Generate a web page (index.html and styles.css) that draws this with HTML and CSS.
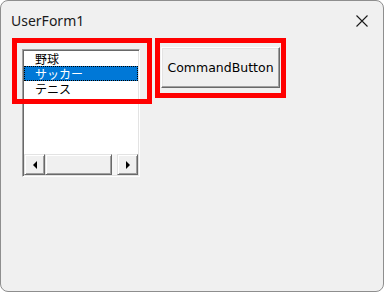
FILE: index.html
```html
<!DOCTYPE html>
<html lang="ja">
<head>
<meta charset="utf-8">
<title>UserForm1</title>
<link rel="stylesheet" href="styles.css">
</head>
<body>
<div class="window">
  <div class="titlebar">
    <span class="title">UserForm1</span>
    <svg class="close" width="12" height="12" viewBox="0 0 12 12"><path d="M0.5 0.5 L11.5 11.5 M11.5 0.5 L0.5 11.5" stroke="#1a1a1a" stroke-width="1.1" fill="none"/></svg>
  </div>
  <div class="content">
    <div class="listbox">
      <div class="items">
        <div class="item">野球</div>
        <div class="item selected">サッカー</div>
        <div class="item">テニス</div>
      </div>
      <div class="hscroll">
        <div class="sbtn"><span class="arrow-left"></span></div>
        <div class="thumb"></div>
        <div class="track"></div>
        <div class="sbtn"><span class="arrow-right"></span></div>
      </div>
    </div>
    <div class="cmd">CommandButton</div>
  </div>
  <div class="mark mark-list"></div>
  <div class="mark mark-button"></div>
</div>
</body>
</html>
```

FILE: styles.css
```css
html, body {
  margin: 0;
  padding: 0;
  background: #ffffff;
}

.window {
  position: relative;
  width: 384px;
  height: 292px;
  box-sizing: border-box;
  border: 1px solid #8e8e8e;
  border-radius: 8px;
  background: #f0f0f0;
  overflow: hidden;
}

.titlebar {
  height: 37px;
  display: flex;
  align-items: center;
  justify-content: space-between;
  padding: 0 15px 0 10px;
}

.title {
  font-family: "Noto Sans", "Open Sans", sans-serif;
  font-size: 14px;
  color: #1a1a1a;
  margin-top: 2px;
}

.close {
  display: block;
  margin-top: 2px;
}

.content {
  display: flex;
  align-items: flex-start;
  padding: 9px 0 0 21px;
}

.listbox {
  margin-top: 2px;
  width: 118px;
  height: 128px;
  box-sizing: border-box;
  border: 1px solid;
  border-color: #a0a0a0 #ffffff #ffffff #a0a0a0;
  box-shadow: inset 1px 1px #696969, inset -1px -1px #e3e3e3;
  background: #ffffff;
  padding: 1px;
  display: flex;
  flex-direction: column;
}

.items {
  flex: 1;
  font-family: "Noto Sans CJK JP", "Noto Sans", sans-serif;
  font-size: 12px;
  color: #000000;
}

.item {
  height: 15px;
  line-height: 15px;
  padding-left: 11px;
  white-space: nowrap;
}

.item.selected {
  background: #0078d7;
  color: #ffffff;
  outline: 1px dotted #000000;
  outline-offset: -1px;
}

.hscroll {
  height: 21px;
  display: flex;
}

.sbtn {
  width: 21px;
  box-sizing: border-box;
  background: #f0f0f0;
  border: 1px solid;
  border-color: #e3e3e3 #696969 #696969 #e3e3e3;
  box-shadow: inset 1px 1px #ffffff, inset -1px -1px #a0a0a0;
  display: flex;
  align-items: center;
  justify-content: center;
}

.thumb {
  width: 67px;
  box-sizing: border-box;
  background: #f0f0f0;
  border: 1px solid;
  border-color: #e3e3e3 #696969 #696969 #e3e3e3;
  box-shadow: inset 1px 1px #ffffff, inset -1px -1px #a0a0a0;
}

.track {
  flex: 1;
  background: #f6f6f6;
}

.arrow-left {
  width: 0;
  height: 0;
  border-top: 4px solid transparent;
  border-bottom: 4px solid transparent;
  border-right: 4px solid #000000;
}

.arrow-right {
  width: 0;
  height: 0;
  border-top: 4px solid transparent;
  border-bottom: 4px solid transparent;
  border-left: 4px solid #000000;
}

.cmd {
  margin-left: 21px;
  width: 119px;
  height: 41px;
  box-sizing: border-box;
  background: #f0f0f0;
  border: 1px solid;
  border-color: #ffffff #696969 #696969 #ffffff;
  box-shadow: inset -1px -1px #a0a0a0, inset 1px 1px #e3e3e3;
  display: flex;
  align-items: center;
  justify-content: center;
  font-family: "DejaVu Sans", sans-serif;
  font-size: 12.5px;
  color: #000000;
}

.mark {
  position: absolute;
  box-sizing: border-box;
  border: 5px solid #ff0000;
}

.mark-list {
  left: 11px;
  top: 37px;
  width: 140px;
  height: 66px;
}

.mark-button {
  left: 154px;
  top: 37px;
  width: 131px;
  height: 60px;
}
```
